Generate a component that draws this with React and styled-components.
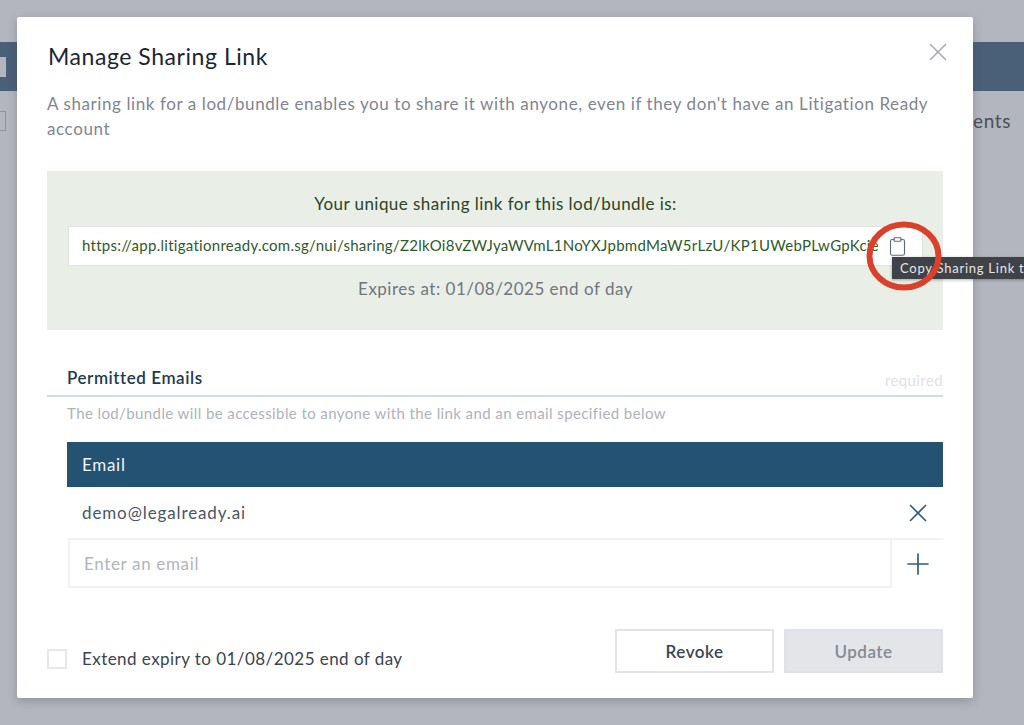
import React from 'react';
import styled, { createGlobalStyle } from 'styled-components';
import { Clipboard, Plus, X } from 'lucide-react';

const Global = createGlobalStyle`
  html, body { margin: 0; padding: 0; }
  body { font-family: "Lato", "Noto Sans", sans-serif; overflow: hidden; }
  * { box-sizing: border-box; }
`;

const Page = styled.div`
  position: relative;
  width: 1024px;
  height: 725px;
  overflow: hidden;
  background: #b3b6be;
  padding-top: 42px;
`;

const BackBar = styled.div`
  height: 49px;
  background: #4a6078;
  display: flex;
  align-items: center;
`;

const BackBarBox = styled.span`
  width: 6px;
  height: 20px;
  background: #b3b6be;
`;

const BackRow = styled.div`
  display: flex;
  justify-content: space-between;
  align-items: center;
  height: 60px;
  padding-right: 13px;
`;

const BackBox = styled.span`
  width: 6px;
  height: 20px;
  border: 1px solid #8f939c;
  border-left: 0;
`;

const BackText = styled.span`
  font-size: 19px;
  letter-spacing: 0.6px;
  color: #4b4f57;
  margin-top: -2px;
`;

const Modal = styled.div`
  position: absolute;
  left: 17px;
  top: 17px;
  width: 956px;
  height: 681px;
  background: #fff;
  border-radius: 2px;
  box-shadow: 0 3px 10px rgba(60, 64, 75, 0.3);
  padding: 24px 30px 0;
`;

const Title = styled.h2`
  margin: 0;
  height: 30px;
  font-size: 23px;
  line-height: 30px;
  font-weight: 400;
  letter-spacing: 0.55px;
  padding-left: 1px;
  color: #1c2536;
`;

const CloseButton = styled.span`
  position: absolute;
  top: 20px;
  right: 20px;
  display: flex;
  color: #a6aab3;
`;

const Description = styled.p`
  margin: 20px 0 0;
  font-size: 17px;
  line-height: 25px;
  letter-spacing: 0.59px;
  color: #7f8591;
`;

const LinkPanel = styled.section`
  margin-top: 30px;
  height: 159px;
  background: #e9eee7;
  padding: 20px 20px 0 21px;
  display: flex;
  flex-direction: column;
  align-items: center;
`;

const PanelTitle = styled.div`
  height: 25px;
  font-size: 17px;
  line-height: 25px;
  letter-spacing: 0.45px;
  color: #2c4423;
`;

const LinkBox = styled.div`
  margin-top: 10px;
  width: 100%;
  height: 40px;
  display: flex;
  background: #fff;
  border: 1px solid #dfe3e2;
`;

const LinkText = styled.div`
  flex: 1;
  min-width: 0;
  padding-left: 13px;
  font-size: 15px;
  line-height: 37px;
  letter-spacing: 0.28px;
  white-space: nowrap;
  overflow: hidden;
  color: #2f5a2a;
`;

const CopyButton = styled.span`
  flex: none;
  width: 44px;
  padding-right: 6px;
  display: flex;
  align-items: center;
  justify-content: center;
  color: #5f6b7a;
`;

const Expires = styled.div`
  margin-top: 10px;
  height: 25px;
  font-size: 17px;
  line-height: 25px;
  letter-spacing: 0.5px;
  color: #70767f;
`;

const SectionHead = styled.div`
  margin-top: 35px;
  height: 32px;
  padding: 0 0 5px 20px;
  display: flex;
  justify-content: space-between;
  align-items: flex-end;
  border-bottom: 2px solid #cfdde6;
`;

const SectionTitle = styled.span`
  font-size: 17px;
  line-height: 25px;
  font-weight: 600;
  letter-spacing: 0.55px;
  color: #223a4e;
`;

const Required = styled.span`
  font-size: 15px;
  line-height: 20px;
  letter-spacing: 0.4px;
  color: #dfe1e5;
`;

const Helper = styled.p`
  margin: 6px 0 0 20px;
  font-size: 15px;
  line-height: 20px;
  letter-spacing: 0.4px;
  color: #aeb2bb;
`;

const Table = styled.div`
  margin: 19px 0 0 20px;
`;

const HeaderRow = styled.div`
  height: 45px;
  padding-left: 15px;
  display: flex;
  align-items: center;
  background: #235273;
  font-size: 17px;
  letter-spacing: 0.7px;
  color: #f2f5f7;
`;

const EmailRow = styled.div`
  height: 51px;
  padding-left: 15px;
  display: flex;
  align-items: center;
  justify-content: space-between;
  font-size: 17px;
  letter-spacing: 0.88px;
  color: #4b5462;
`;

const IconCell = styled.span`
  flex: none;
  width: 51px;
  padding-left: 1px;
  display: flex;
  align-items: center;
  justify-content: center;
  color: #2f5d80;
`;

const InputRow = styled.div`
  height: 50px;
  display: flex;
  border-top: 2px solid #f0f2f3;
`;

const EmailInput = styled.div`
  flex: 1;
  margin-left: 1px;
  padding-left: 14px;
  display: flex;
  align-items: center;
  border: 2px solid #f0f2f3;
  border-top: 0;
  font-size: 17px;
  letter-spacing: 0.65px;
  color: #b0b4bc;
`;

const Footer = styled.div`
  margin-top: 41px;
  display: flex;
  align-items: center;
  justify-content: space-between;
`;

const CheckLabel = styled.label`
  display: flex;
  align-items: center;
  gap: 15px;
  margin-top: 15px;
  font-size: 17px;
  letter-spacing: 0.45px;
  color: #3a4352;
`;

const CheckBox = styled.span`
  width: 20px;
  height: 20px;
  border: 2px solid #e5e7eb;
`;

const Actions = styled.div`
  display: flex;
  gap: 10px;
`;

const Button = styled.button`
  width: 159px;
  height: 44px;
  padding: 0;
  font-family: inherit;
  font-size: 17px;
  font-weight: 600;
  letter-spacing: 0.5px;
  border: 2px solid ${p => (p.disabled ? '#dfe1e6' : '#e3e4ea')};
  background: ${p => (p.disabled ? '#e3e5e9' : '#fff')};
  color: ${p => (p.disabled ? '#858a94' : '#3a4352')};
`;

const Tooltip = styled.div`
  position: absolute;
  left: 892px;
  top: 257px;
  width: 140px;
  height: 22px;
  padding-left: 8px;
  background: #3f4247;
  box-shadow: 0 1px 3px rgba(0, 0, 0, 0.3);
  font-size: 13px;
  line-height: 22px;
  letter-spacing: 0.75px;
  white-space: nowrap;
  color: #e6e7e9;
`;

const Annotation = styled.svg`
  position: absolute;
  left: 865px;
  top: 220px;
`;

export default function App() {
  return (
    <Page>
      <Global />
      <BackBar><BackBarBox /></BackBar>
      <BackRow>
        <BackBox />
        <BackText>ents</BackText>
      </BackRow>
      <Modal>
        <Title>Manage Sharing Link</Title>
        <CloseButton><X size={30} strokeWidth={1.2} /></CloseButton>
        <Description>
          A sharing link for a lod/bundle enables you to share it with anyone, even if they don't have an Litigation Ready account
        </Description>
        <LinkPanel>
          <PanelTitle>Your unique sharing link for this lod/bundle is:</PanelTitle>
          <LinkBox>
            <LinkText>https://app.litigationready.com.sg/nui/sharing/Z2lkOi8vZWJyaWVmL1NoYXJpbmdMaW5rLzU/KP1UWebPLwGpKciel</LinkText>
            <CopyButton><Clipboard size={21} strokeWidth={1.3} /></CopyButton>
          </LinkBox>
          <Expires>Expires at: 01/08/2025 end of day</Expires>
        </LinkPanel>
        <SectionHead>
          <SectionTitle>Permitted Emails</SectionTitle>
          <Required>required</Required>
        </SectionHead>
        <Helper>The lod/bundle will be accessible to anyone with the link and an email specified below</Helper>
        <Table>
          <HeaderRow>Email</HeaderRow>
          <EmailRow>
            demo@legalready.ai
            <IconCell><X size={30} strokeWidth={1.36} /></IconCell>
          </EmailRow>
          <InputRow>
            <EmailInput>Enter an email</EmailInput>
            <IconCell><Plus size={34} strokeWidth={1.2} /></IconCell>
          </InputRow>
        </Table>
        <Footer>
          <CheckLabel>
            <CheckBox />
            Extend expiry to 01/08/2025 end of day
          </CheckLabel>
          <Actions>
            <Button>Revoke</Button>
            <Button disabled>Update</Button>
          </Actions>
        </Footer>
      </Modal>
      <Tooltip>Copy Sharing Link to clipboard</Tooltip>
      <Annotation width="78" height="72" viewBox="0 0 78 72">
        <ellipse cx="39" cy="36" rx="34.5" ry="31.5" fill="none" stroke="#d9412b" strokeWidth="6" />
      </Annotation>
    </Page>
  );
}
